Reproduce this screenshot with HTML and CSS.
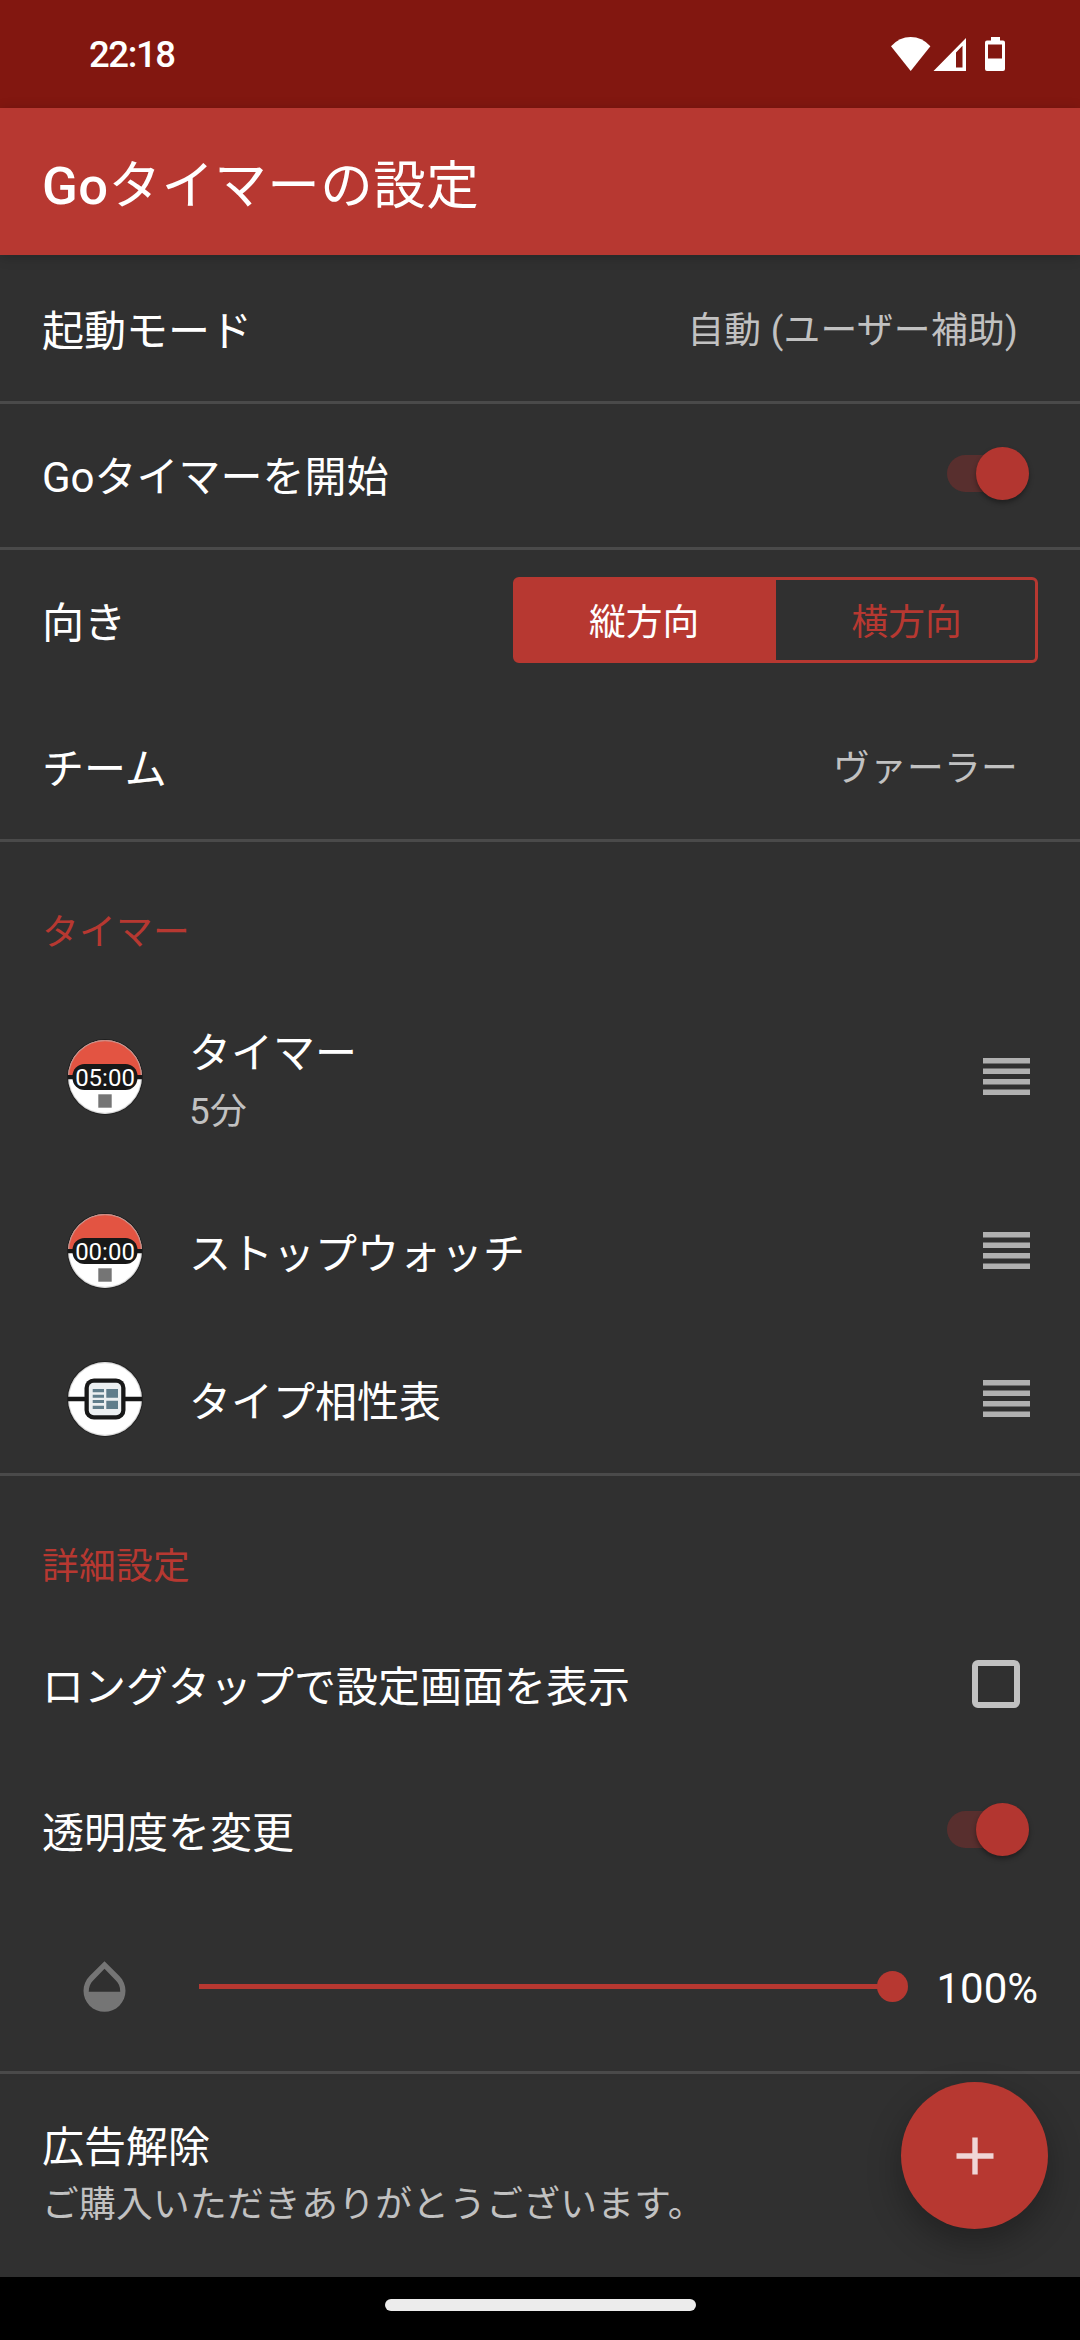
FILE: index.html
```html
<!DOCTYPE html>
<html lang="ja">
<head>
<meta charset="utf-8">
<title>Goタイマーの設定</title>
<link rel="stylesheet" href="styles.css">
</head>
<body>
<div class="screen">
  <header class="status">
    <span class="clock">22:18</span>
    <svg class="status-icons" width="116" height="36" viewBox="0 0 116 36">
      <path fill="#fff" d="M0 10.2Q8.5 1 19.7 1T39.400 10.200L19.700 35Z"/>
      <path fill="#fff" fill-rule="evenodd" d="M42.500 35L75 2V35ZM65 16.500V31.500H71.500V9.800Z"/>
      <path fill="#fff" fill-rule="evenodd" d="M100 1h9v3.500h3q2 0 2 2V33q0 2-2 2H96q-2 0-2-2V6.500q0-2 2-2h4ZM97 8.500v14h14v-14Z"/>
    </svg>
  </header>
  <div class="appbar"><h1 class="title"><span class="latin">Go</span>タイマーの設定</h1></div>

  <main class="content">
    <div class="row divided">
      <span class="label">起動モード</span>
      <span class="value">自動 (ユーザー補助)</span>
    </div>
    <div class="row divided">
      <span class="label">Goタイマーを開始</span>
      <span class="switch high"><span class="thumb"></span></span>
    </div>
    <div class="row">
      <span class="label">向き</span>
      <div class="segments">
        <span class="segment selected">縦方向</span>
        <span class="segment">横方向</span>
      </div>
    </div>
    <div class="row divided">
      <span class="label">チーム</span>
      <span class="value">ヴァーラー</span>
    </div>

    <h2 class="section">タイマー</h2>
    <div class="item tall">
      <svg class="ball" viewBox="-38 -38 76 76">
        <circle r="38" fill="#1f1f1f"/>
        <circle r="36.900" fill="#fff"/>
        <path d="M-36.900 0a36.900 36.900 0 0 1 73.800 0Z" fill="#e35442"/>
        <circle r="36.400" fill="none" stroke="#b9b9b9" stroke-opacity=".5" stroke-width="1.200"/>
        <path d="M-37-2H37V2.300H-37Z" fill="#181818"/>
        <rect x="-32.500" y="-13" width="65" height="26" rx="12" fill="#181818"/>
        <text class="ball-time" y="9">05:00</text>
        <rect x="-6.700" y="17.300" width="13.400" height="13.400" fill="#757575"/>
      </svg>
      <div class="lines"><span class="label">タイマー</span><span class="sub">5分</span></div>
      <svg class="handle" viewBox="0 0 47 37"><path d="M0 0h47v5.500H0zM0 10.500h47V16H0zM0 21h47v5.500H0zM0 31.500h47V37H0z"/></svg>
    </div>
    <div class="item">
      <svg class="ball" viewBox="-38 -38 76 76">
        <circle r="38" fill="#1f1f1f"/>
        <circle r="36.900" fill="#fff"/>
        <path d="M-36.900 0a36.900 36.900 0 0 1 73.800 0Z" fill="#e35442"/>
        <circle r="36.400" fill="none" stroke="#b9b9b9" stroke-opacity=".5" stroke-width="1.200"/>
        <path d="M-37-2H37V2.300H-37Z" fill="#181818"/>
        <rect x="-32.500" y="-13" width="65" height="26" rx="12" fill="#181818"/>
        <text class="ball-time" y="9">00:00</text>
        <rect x="-6.700" y="17.300" width="13.400" height="13.400" fill="#757575"/>
      </svg>
      <div class="lines"><span class="label">ストップウォッチ</span></div>
      <svg class="handle" viewBox="0 0 47 37"><path d="M0 0h47v5.500H0zM0 10.500h47V16H0zM0 21h47v5.500H0zM0 31.500h47V37H0z"/></svg>
    </div>
    <div class="item">
      <svg class="ball" viewBox="-38 -38 76 76">
        <circle r="38" fill="#1f1f1f"/>
        <circle r="36.900" fill="#fff"/>
        <circle r="36.400" fill="none" stroke="#b9b9b9" stroke-opacity=".5" stroke-width="1.200"/>
        <path d="M-37-2.200H37V2.200H-37Z" fill="#181818"/>
        <rect x="-20.500" y="-20.500" width="41" height="41" rx="9.500" fill="#181818"/>
        <rect x="-16.200" y="-16.200" width="32.400" height="32.400" rx="5" fill="#eceff1"/>
        <path fill="#607d8b" d="M-12.300-10H-1v3.200H-12.300zM-12.300-4.300H-1v3H-12.300zM-12.300 1H-1v3H-12.300zM-12.300 6.800H-1V10H-12.300zM1.300-10H13v8.700H1.300zM1.300 1.700H13V10H1.300z"/>
      </svg>
      <div class="lines"><span class="label">タイプ相性表</span></div>
      <svg class="handle" viewBox="0 0 47 37"><path d="M0 0h47v5.500H0zM0 10.500h47V16H0zM0 21h47v5.500H0zM0 31.500h47V37H0z"/></svg>
    </div>
    <hr class="divider">

    <h2 class="section">詳細設定</h2>
    <div class="row low">
      <span class="label">ロングタップで設定画面を表示</span>
      <span class="checkbox"></span>
    </div>
    <div class="row low">
      <span class="label">透明度を変更</span>
      <span class="switch raised"><span class="thumb"></span></span>
    </div>
    <div class="opacity">
      <svg class="drop" viewBox="0 0 24 24"><path d="M17.660 8L12 2.350 6.340 8C4.780 9.560 4 11.640 4 13.640s.78 4.110 2.340 5.670 3.610 2.350 5.660 2.350 4.100-.79 5.660-2.350S20 15.640 20 13.640 19.220 9.560 17.660 8zM6 14c.01-2 .62-3.270 1.760-4.400L12 5.270l4.240 4.380C17.380 10.770 17.990 12 18 14H6z"/></svg>
      <div class="slider"><div class="track"></div><div class="knob"></div></div>
      <span class="percent">100%</span>
    </div>
    <hr class="divider">

    <div class="purchase">
      <span class="label">広告解除</span>
      <span class="sub">ご購入いただきありがとうございます。</span>
    </div>
    <div class="fab">
      <svg width="38" height="38" viewBox="0 0 38 38"><path fill="#f0d5d6" d="M16.300.5h5.400v15.800h15.800v5.400H21.700v15.800h-5.400V21.700H.5v-5.400h15.800z"/></svg>
    </div>
  </main>
  <footer class="navbar"><div class="pill"></div></footer>
</div>
</body>
</html>
```
FILE: styles.css
```css
* { box-sizing: border-box; }

body {
  margin: 0;
  background: #303030;
  color: #fff;
  font-family: Roboto, "Noto Sans CJK JP", sans-serif;
  font-size: 42px;
}

.screen {
  width: 1080px;
  height: 2340px;
  display: flex;
  flex-direction: column;
  overflow: hidden;
}

.status {
  height: 108px;
  padding: 0 74px 0 89px;
  background: #821710;
  display: flex;
  align-items: center;
  justify-content: space-between;
}

.clock {
  padding-top: 2px;
  font-size: 36.5px;
  font-weight: 500;
  line-height: 42px;
  letter-spacing: -1.4px;
}

.status-icons { display: block; margin-right: -1px; }

.appbar {
  position: relative;
  z-index: 1;
  height: 147px;
  padding: 9px 42px 0;
  background: #b73831;
  display: flex;
  align-items: center;
  box-shadow: 0 2px 12px rgba(0, 0, 0, 0.2);
}

.title {
  margin: 0;
  font-size: 52.5px;
  font-weight: 400;
  line-height: 62px;
  letter-spacing: 0.45px;
}

.latin { font-weight: 500; }

.content {
  position: relative;
  height: 2022px;
  padding-top: 3px;
}

.row {
  height: 146px;
  padding: 0 42px;
  display: flex;
  align-items: center;
  justify-content: space-between;
}

.divided {
  border-bottom: 3px solid #4a4a4a;
  padding-top: 3px;
}

.row .label { padding-top: 2px; }
.low .label { padding-top: 8px; }

.label { line-height: 56px; white-space: nowrap; }

.value,
.sub {
  font-size: 36.75px;
  line-height: 56px;
  letter-spacing: 0.27px;
  color: #c1c1c1;
  white-space: nowrap;
}

.value { margin-right: 20px; }

.switch {
  width: 82px;
  height: 37px;
  margin-right: 9px;
  border-radius: 19px;
  background: #582f2e;
  display: flex;
  align-items: center;
  justify-content: flex-end;
}

.high { margin-bottom: 7px; }
.raised { margin-bottom: 1px; }

.thumb {
  flex: none;
  width: 53px;
  height: 53px;
  border-radius: 50%;
  background: #b33630;
  box-shadow: 0 3px 5px rgba(0, 0, 0, 0.35);
}

.segments {
  width: 525px;
  height: 86px;
  margin-bottom: 6px;
  border: 3px solid #b73831;
  border-radius: 6px;
  display: flex;
}

.segment {
  flex: 1;
  padding: 7px 0 0 3px;
  font-size: 36.75px;
  line-height: 72px;
  text-align: center;
  color: #b73831;
}

.selected { padding: 7px 3px 0 0; background: #b73831; color: #fff; }

.section {
  height: 135px;
  margin: 0;
  padding: 46px 42px 0;
  font-size: 36.75px;
  font-weight: 400;
  line-height: 89px;
  letter-spacing: 0.25px;
  color: #b73831;
}

.item {
  height: 148px;
  padding: 0 50px 0 67px;
  display: flex;
  align-items: center;
}

.tall { height: 200px; }

.ball { width: 76px; height: 76px; flex: none; }

.ball-time {
  font-size: 24px;
  fill: #fff;
  text-anchor: middle;
}

.lines {
  flex: 1;
  margin-left: 46px;
  padding-top: 8px;
  display: flex;
  flex-direction: column;
}

.tall .lines { padding-top: 12px; gap: 2px; }

.handle { width: 47px; height: 37px; margin-bottom: 2px; fill: #b0b0b0; }

.divider {
  height: 3px;
  margin: 0;
  border: 0;
  background: #4a4a4a;
}

.checkbox {
  width: 48px;
  height: 48px;
  margin-right: 18px;
  border: 6px solid #c1c1c1;
  border-radius: 6px;
}

.opacity {
  height: 168px;
  padding: 0 42px 0 73px;
  display: flex;
  align-items: center;
}

.drop { width: 63px; height: 63px; margin-bottom: 1px; fill: #757575; }

.slider {
  width: 709px;
  margin: 0 0 1px 63px;
  display: flex;
  align-items: center;
}

.track { flex: 1; height: 5px; margin-right: -2px; background: #b73831; }

.knob { width: 31px; height: 31px; border-radius: 50%; background: #b73831; }

.percent { flex: 1; text-align: right; line-height: 50px; padding-top: 3px; }

.purchase {
  padding: 46px 42px 0;
  display: flex;
  flex-direction: column;
  gap: 1px;
}

.fab {
  position: absolute;
  right: 32px;
  bottom: 48px;
  width: 147px;
  height: 147px;
  border-radius: 50%;
  background: #b73831;
  box-shadow: 0 14px 34px rgba(0, 0, 0, 0.3);
  display: flex;
  align-items: center;
  justify-content: center;
}

.navbar {
  position: relative;
  height: 63px;
  padding-top: 22px;
  background: #000;
}

.pill {
  width: 311px;
  height: 12px;
  margin: 0 auto;
  border-radius: 6px;
  background: #ececec;
}
```
